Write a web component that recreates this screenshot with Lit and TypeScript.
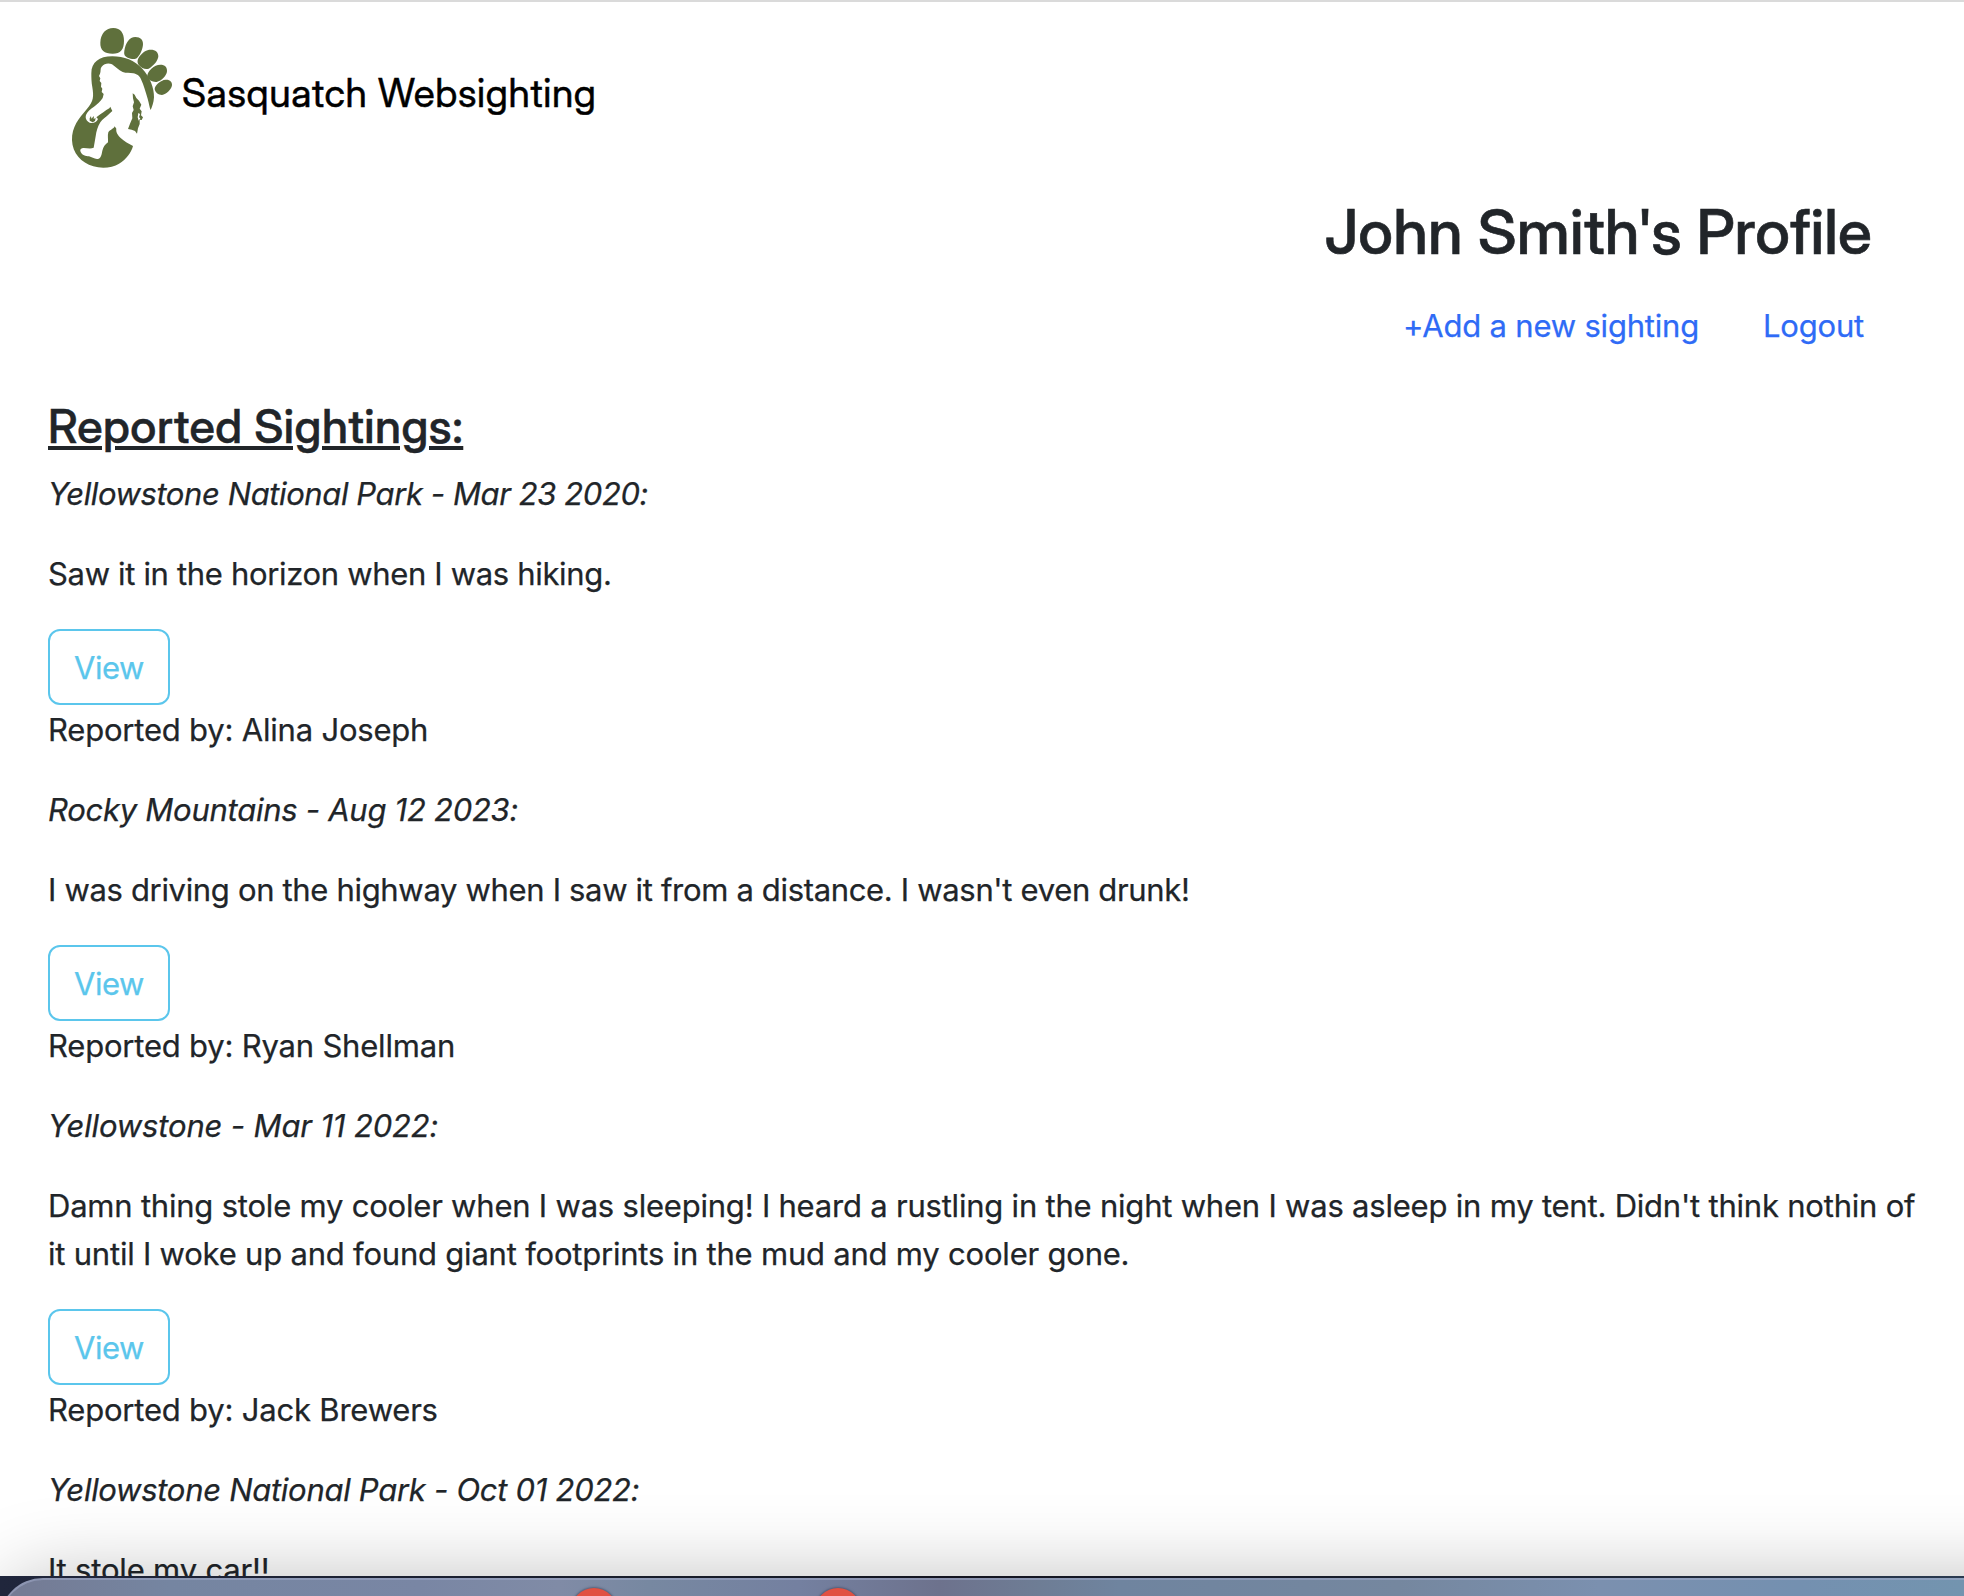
import { LitElement, html, css, svg } from "lit";
import { customElement } from "lit/decorators.js";

interface Sighting {
  place: string;
  note: string;
  placeTracking: number;
  noteTracking: number;
  reporter?: string;
}

const sightings: Sighting[] = [
  { place: "Yellowstone National Park - Mar 23 2020:", note: "Saw it in the horizon when I was hiking.", placeTracking: -0.41, noteTracking: -0.33, reporter: "Alina Joseph" },
  { place: "Rocky Mountains - Aug 12 2023:", note: "I was driving on the highway when I saw it from a distance. I wasn't even drunk!", placeTracking: -0.27, noteTracking: -0.33, reporter: "Ryan Shellman" },
  {
    place: "Yellowstone - Mar 11 2022:",
    note: "Damn thing stole my cooler when I was sleeping! I heard a rustling in the night when I was asleep in my tent. Didn't think nothin of\nit until I woke up and found giant footprints in the mud and my cooler gone.",
    placeTracking: -0.15,
    noteTracking: -0.21,
    reporter: "Jack Brewers",
  },
  { place: "Yellowstone National Park - Oct 01 2022:", note: "It stole my car!!", placeTracking: -0.29, noteTracking: -0.18 },
];

const logo = svg`
  <g fill="#5f703c">
    <path d="M190 54C212 54 222 70 222 92C222 118 212 131 188 131C163 131 150 120 151 98C152 70 168 54 190 54Z"/>
    <path d="M256 81C272 81 279 90 279 102C279 116 270 136 261 144C255 149 243 147 233 143C224 139 221 133 223 122C227 99 238 81 256 81Z"/>
    <path d="M302 119C317 119 325 127 325 139C325 151 309 170 296 176C286 180 274 174 267 166C260 157 262 148 269 139C278 127 289 119 302 119Z"/>
    <path d="M331 164C345 164 352 172 351 184C350 197 335 213 320 216C307 217 295 210 292 202C290 193 296 184 304 176C313 168 321 164 331 164Z"/>
    <path d="M347 209C360 208 367 216 366 226C364 239 349 253 336 255C325 255 315 246 314 237C314 227 331 210 347 209Z"/>
    <path d="M124 190C124 157 147 139 187 139C222 139 254 151 277 176C300 202 313 234 312 262C311 279 306 291 302 300C299 294 297 280 293 266C287 247 282 227 273 208C268 196 260 192 250 190C240 188 229 191 218 186C205 180 197 170 186 163C176 158 163 160 155 170C150 176 153 184 150 191L147 198L151 205L149 213L154 219L153 230L157 236L155 246L161 252L158 264C151 274 142 283 132 290C122 297 111 305 108 315C105 325 110 334 119 338C129 341 140 337 144 327L139 322L145 317L152 312L160 307L169 300L178 295L181 290L184 297L187 303L178 311C169 320 157 327 151 337C143 350 139 364 137 379L131 413C121 418 108 413 99 414C92 415 89 420 92 426C96 435 107 439 117 439C126 441 135 449 146 446C154 442 155 432 157 422C160 411 165 403 174 397C175 387 172 377 175 367C180 359 191 357 194 349L199 356C197 366 204 376 212 384C222 393 237 402 249 408C244 427 230 448 207 461C187 474 155 476 130 469C94 459 67 429 66 391C65 350 87 326 110 298C132 273 131 258 127 232C124 216 124 202 124 190Z"/>
    <path d="M119 325L123 318L124 326L129 321L132 318L131 327L137 324L135 333L128 337L119 332Z"/>
    <path d="M248 250L254 254L259 264L267 272L274 284L269 296L275 304L273 316L279 322L275 330L269 329L269 342L264 355L261 371L255 363L245 359L234 357L240 341L247 325L246 309L251 300L248 289L252 277L249 265Z"/>
  </g>
  <path fill="#fff" d="M265 309L270 312L267 322L271 325L266 332L263 322Z"/>`;

@customElement("app-root")
export class AppRoot extends LitElement {
  static styles = css`
    :host {
      display: block;
      position: relative;
      box-sizing: border-box;
      height: 1596px;
      overflow: hidden;
      background: #fff;
      color: #212529;
      font: 400 31px/48px Inter, "Liberation Sans", sans-serif;
      letter-spacing: -0.33px;
      -webkit-text-stroke: 0.25px currentColor;
      border-top: 2px solid #dadada;
    }
    * { box-sizing: border-box; }
    p, h2, h4 { margin: 0; }
    .nav { display: flex; align-items: flex-start; padding: 8px 50px 0; height: 183px; }
    .logo { display: block; width: 140px; height: 170px; flex: none; }
    .brand { color: #000; font-family: "Inter Display", Inter, sans-serif; font-size: 39px; line-height: 60px; letter-spacing: 0.65px; margin: 53px 0 0 -8px; white-space: nowrap; -webkit-text-stroke-width: 0.5px; }
    .profile { display: flex; flex-direction: column; align-items: flex-end; padding: 8px 92px 0 0; height: 210px; }
    .name { font-family: "Inter Display", Inter, sans-serif; font-size: 62px; line-height: 77px; font-weight: 500; letter-spacing: 0.15px; white-space: nowrap; -webkit-text-stroke-width: 0.6px; }
    .links { display: flex; gap: 64px; padding: 32px 8px 0 0; }
    .link { color: #2f6bf6; letter-spacing: -0.2px; white-space: nowrap; }
    .list { padding: 0 48px; }
    .title {
      font-family: "Inter Display", Inter, sans-serif;
      font-size: 46.5px; line-height: 58px; font-weight: 500; letter-spacing: 0.52px;
      padding-top: 2px; margin-bottom: 15px; width: max-content; -webkit-text-stroke-width: 0.5px;
      text-decoration: underline; text-decoration-thickness: 4px; text-underline-offset: 3px;
    }
    .place { font-style: italic; margin-bottom: 32px; }
    .note { margin-bottom: 31px; white-space: pre-line; }
    .view {
      display: block; width: 122px; height: 76px; padding: 2px 0 0; margin: 0 0 1px;
      border: 2px solid #5bc6ec; border-radius: 12px; background: transparent;
      color: #5bc6ec; font: inherit; letter-spacing: -0.4px;
    }
    .by { margin-bottom: 32px; letter-spacing: -0.2px; }
    .desk { position: absolute; left: 0; right: 0; bottom: 0; height: 20px; background: linear-gradient(90deg, #20263c, #161a26 40%, #12131f 48%, #1a2130 80%, #2a3a50); overflow: hidden; }
    .shade { position: absolute; left: 2px; right: -120px; bottom: -100px; height: 118px; border-radius: 46px; box-shadow: 0 0 80px rgba(0, 0, 0, 0.26); }
    .dock {
      position: absolute; left: -1px; right: -120px; top: 2px; height: 120px; border-radius: 44px;
      border: 2px solid rgba(160, 170, 200, 0.55);
      background: linear-gradient(90deg, #747a93 0, #7585a1 170px, #7986a4 420px, #808ba6 560px, #7788a1 650px, #7480a0 800px, #6d728d 940px, #6e7d95 1040px, #6f849f 1120px, #75879f 1400px, #7b90af 1600px, #7490b0 1800px, #7394af 1964px);
      background-origin: border-box;
    }
    .badge { position: absolute; top: 12px; width: 46px; height: 46px; border-radius: 50%; background: #e15142; box-shadow: 0 0 2px 1px rgba(60, 70, 95, 0.6); }
    .badge-a { left: 571px; }
    .badge-b { left: 815px; }
  `;

  render() {
    return html`
      <header class="nav">
        <svg class="logo" viewBox="0 0 420 510">${logo}</svg>
        <span class="brand">Sasquatch Websighting</span>
      </header>
      <section class="profile">
        <h2 class="name">John Smith's Profile</h2>
        <nav class="links"><a class="link">+Add a new sighting</a><a class="link">Logout</a></nav>
      </section>
      <main class="list">
        <h4 class="title">Reported Sightings:</h4>
        ${sightings.map((s) => html`
          <p class="place" style="letter-spacing:${s.placeTracking}px">${s.place}</p>
          <p class="note" style="letter-spacing:${s.noteTracking}px">${s.note}</p>
          ${s.reporter ? html`<button class="view">View</button><p class="by">Reported by: ${s.reporter}</p>` : ""}`)}
      </main>
      <div class="shade"></div>
      <div class="desk"><div class="dock"></div><div class="badge badge-a"></div><div class="badge badge-b"></div></div>`;
  }
}
